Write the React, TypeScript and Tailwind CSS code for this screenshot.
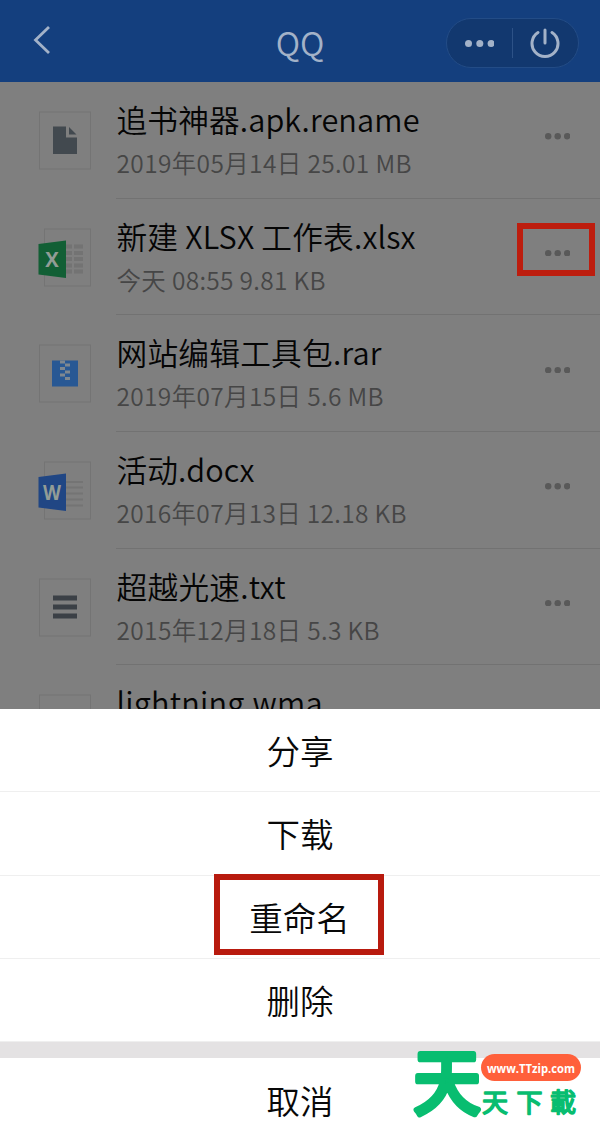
import type { ReactNode } from 'react'

type FileKind = 'unknown' | 'excel' | 'zip' | 'word' | 'text' | 'audio'

interface FileItem {
  name: string
  info?: string
  kind: FileKind
  width: number
  infoWidth?: number
  marked?: boolean
}

const files: FileItem[] = [
  { name: '追书神器.apk.rename', info: '2019年05月14日 25.01 MB', kind: 'unknown', width: 303, infoWidth: 295 },
  { name: '新建 XLSX 工作表.xlsx', info: '今天 08:55 9.81 KB', kind: 'excel', width: 299, infoWidth: 209, marked: true },
  { name: '网站编辑工具包.rar', info: '2019年07月15日 5.6 MB', kind: 'zip', width: 265, infoWidth: 267 },
  { name: '活动.docx', info: '2016年07月13日 12.18 KB', kind: 'word', width: 138, infoWidth: 290 },
  { name: '超越光速.txt', info: '2015年12月18日 5.3 KB', kind: 'text', width: 169, infoWidth: 263 },
  { name: 'lightning.wma', kind: 'audio', width: 206 },
]

const actions = ['分享', '下载', '重命名', '删除']

const Dots = ({ className, r, gap }: { className: string; r: number; gap: number }) => (
  <svg className={className} width={gap * 2 + r * 2} height={r * 2} fill="currentColor">
    <circle cx={r} cy={r} r={r} />
    <circle cx={r + gap} cy={r} r={r} />
    <circle cx={r + gap * 2} cy={r} r={r} />
  </svg>
)

const OfficeBadge = ({ color, letter }: { color: string; letter: string }) => (
  <>
    <path d="M0.5 16 L28 12.5 V50 L0.5 46.5 Z" fill={color} />
    <text x="14" y="39" textAnchor="middle" fontSize="22" fontWeight="700" fill="#929c96" fontFamily="'Open Sans', sans-serif"
      textLength={letter === 'X' ? 13.5 : 18} lengthAdjust="spacingAndGlyphs">{letter}</text>
  </>
)

const FileIcon = ({ kind }: { kind: FileKind }) => {
  const office = kind === 'excel' || kind === 'word'
  let glyph: ReactNode = null
  if (kind === 'unknown') {
    glyph = <path d="M15 15.5 H28 V26.5 H39 V43 H15 Z M31 16 L38.5 23.5 H31 Z" fill="#42494f" />
  }
  if (kind === 'excel') {
    glyph = <>
      {[16.5, 23, 29, 35.5, 41.5].map((y) => (
        <path key={y} d={`M28 ${y}h6v4h-6z M36 ${y}h9v4h-9z`} fill="#737373" />
      ))}
      <OfficeBadge color="#125f35" letter="X" />
    </>
  }
  if (kind === 'zip') {
    glyph = <>
      <path d="M14 16.5 H40 V42.5 H14 Z" fill="#285894" />
      <path d="M22 16.5h5v3h-5z M27 19.5h5v3h-5z M22 23h5v3h-5z M27 26.5h5v3h-5z M22 29.5h5v3h-5z M27 33h5v3h-5z" fill="#7f8890" />
    </>
  }
  if (kind === 'word') {
    glyph = <>
      {[21, 26.5, 32.5, 38.5, 44.5].map((y) => (
        <path key={y} d={`M28 ${y}H45`} stroke="#747474" strokeWidth="2" />
      ))}
      <OfficeBadge color="#204684" letter="W" />
    </>
  }
  if (kind === 'text') {
    glyph = <path d="M15 17.5h24v5H15z M15 26.5h24v5H15z M15 35.5h24v5H15z" fill="#3b4046" />
  }
  return <svg className="ml-[38px] shrink-0" width="54" height="59">
    <rect x={office ? 6.5 : 1.5} y="1" width={office ? 46 : 51} height="57" fill="#7f7f7f" stroke="#747474" />
    {glyph}
  </svg>
}

const FileRow = ({ file }: { file: FileItem }) => (
  <li className="flex h-[116.7px] shrink-0">
    <div className="pt-[29px]">
      <FileIcon kind={file.kind} />
    </div>
    <div className="ml-6 flex flex-1 border-b border-[#727272]">
      <svg className="block shrink-0" width="390" height="115">
        <text x="0.5" y="49.5" fontSize="30.7" fill="#050505" textLength={file.width} lengthAdjust="spacing">{file.name}</text>
        {file.info && <text x="0.5" y="90.5" fontSize="24.5" fill="#464646" textLength={file.infoWidth} lengthAdjust="spacing">{file.info}</text>}
      </svg>
      {file.marked
        ? <button className="mt-[24px] ml-[11px] flex h-[53px] w-[78px] items-center justify-center border-6 border-[#bd1d0e] pt-[8px] pl-[3px]">
          <Dots className="text-[#595959]" r={3.2} gap={9.5} />
        </button>
        : <button className="mt-[28px] ml-[11px] flex h-[53px] w-[78px] items-center justify-center pl-[3px]">
          <Dots className="text-[#595959]" r={3.2} gap={9.5} />
        </button>}
    </div>
  </li>
)

const Header = () => (
  <header className="relative flex h-[82px] shrink-0 items-center justify-between bg-[#143f7e] pr-[21px] pl-[33px] text-[#a3b2c8]">
    <svg width="18" height="28" fill="none" stroke="currentColor" strokeWidth="2.8" className="-mt-[2px]">
      <path d="M16 1 L2.5 14 L16 27" />
    </svg>
    <h1 className="absolute inset-x-0 top-[18px] text-center text-[33px] leading-[48px]">QQ</h1>
    <div className="mt-[4px] flex h-[50px] w-[133px] items-center rounded-full border border-[#234c86] bg-[#12386f]">
      <div className="flex w-[65px] justify-center">
        <Dots className="text-[#a3b2c8]" r={3.5} gap={11.3} />
      </div>
      <div className="h-[30px] w-px bg-[#2d5287]" />
      <svg className="ml-[17px]" width="30" height="30" fill="none" stroke="currentColor" strokeWidth="3" strokeLinecap="round">
        <path d="M8 4.5 A13 13 0 1 0 22 4.5 M15 2 V15" />
      </svg>
    </div>
  </header>
)

const ActionSheet = () => (
  <div className="flex flex-1 flex-col bg-white text-center text-[33.5px] text-[#080808]">
    {actions.map((action) => (
      <button key={action} className="flex h-[83.3px] shrink-0 items-center justify-center border-b border-[#efefef] last:border-0">
        {action === '重命名'
          ? <span className="-mt-[4px] mr-[3px] flex h-[81px] w-[170px] items-center justify-center border-6 border-[#b81a0e] pt-[4px] pl-[2px]">{action}</span>
          : <span>{action}</span>}
      </button>
    ))}
    <div className="h-4 shrink-0 bg-[#e4e2e3]" />
    <button className="flex flex-1 items-center justify-center pb-1 pt-2">取消</button>
  </div>
)

// site logo floating over the bottom corner
const Watermark = () => (
  <svg className="absolute right-0 bottom-0" width="200" height="109" fontFamily="'Noto Sans CJK SC', sans-serif">
    <text transform="translate(13.5 77.5) scale(1 1.06)" fontSize="67" fontWeight="400" fill="#08bd70" stroke="#08bd70" strokeWidth="5.5" strokeLinejoin="round">天</text>
    <rect x="81" y="24" width="100" height="27" rx="13.5" fill="#ff603b" />
    <text x="87" y="42.5" fontSize="13" fontWeight="700" fill="#fff" textLength="88" lengthAdjust="spacingAndGlyphs" fontFamily="'Open Sans', sans-serif">www.TTzip.com</text>
    <g fontSize="26" fontWeight="400" fill="#08bd70" stroke="#08bd70" strokeWidth="1.6" strokeLinejoin="round">
      <text x="82" y="82">天</text>
      <text x="116.5" y="82">下</text>
      <text x="150" y="82">載</text>
    </g>
  </svg>
)

export default function App() {
  return <div className="relative flex h-[1139px] w-[600px] flex-col overflow-hidden bg-[#7f7f7f] font-['Noto_Sans_CJK_SC',sans-serif] font-[350]">
    <Header />
    <ul className="flex h-[627px] shrink-0 flex-col overflow-hidden">
      {files.map((file) => <FileRow key={file.name} file={file} />)}
    </ul>
    <ActionSheet />
    <Watermark />
  </div>
}
